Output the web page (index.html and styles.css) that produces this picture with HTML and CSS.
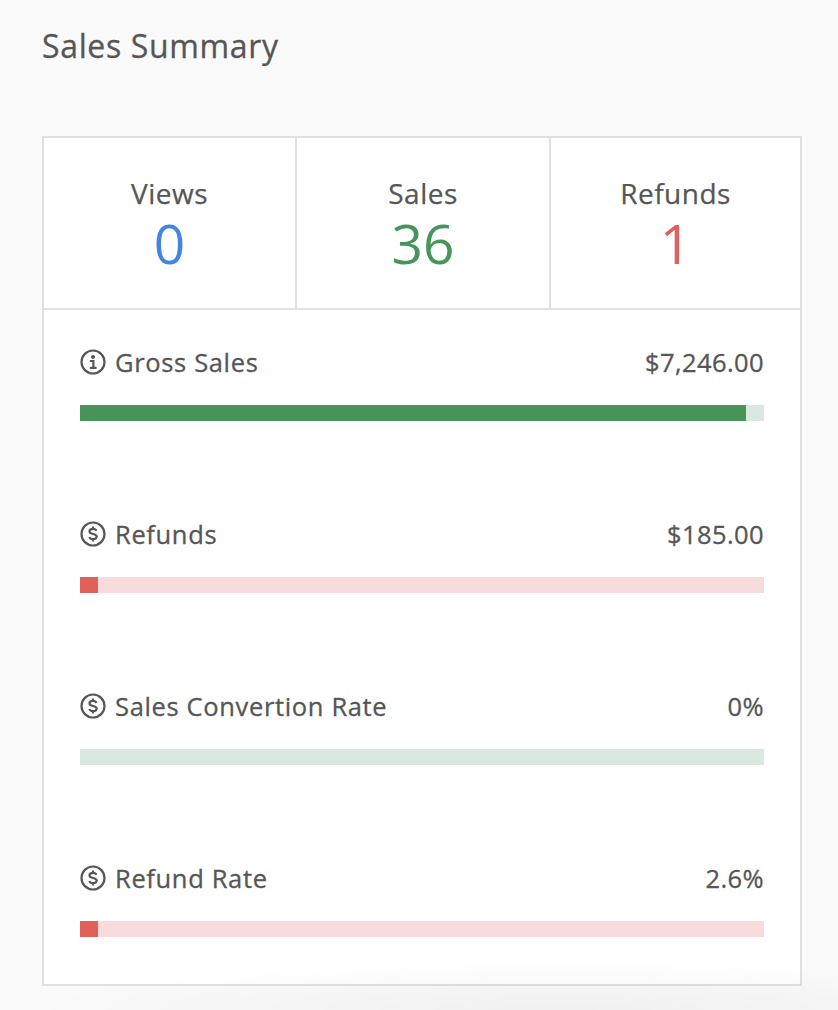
FILE: index.html
```html
<!DOCTYPE html>
<html lang="en">
  <head>
    <meta charset="UTF-8" />
    <meta name="viewport" content="width=device-width, initial-scale=1.0" />
    <title>Sales Summary</title>
    <link rel="stylesheet" href="styles.css">
  </head>
  <body>
    <h1 class="page-title">Sales Summary</h1>

    <div class="card">
      <div class="stats">
        <div class="stat">
          <div class="stat-label">Views</div>
          <div class="stat-value blue">0</div>
        </div>
        <div class="stat">
          <div class="stat-label">Sales</div>
          <div class="stat-value green">36</div>
        </div>
        <div class="stat">
          <div class="stat-label">Refunds</div>
          <div class="stat-value red">1</div>
        </div>
      </div>

      <div class="metrics">
        <div class="metric">
          <div class="metric-head">
            <span class="metric-name">
              <svg class="icon" viewBox="0 0 26 26"><circle cx="13" cy="13" r="11.500"/><circle class="solid" cx="13" cy="8" r="2"/><path d="M9.800 12h3.600v6.500M9.800 18.800h6.800"/></svg>
              Gross Sales
            </span>
            <span>$7,246.00</span>
          </div>
          <div class="bar bar-green"><div class="fill fill-green" style="width: 97.4%"></div></div>
        </div>

        <div class="metric">
          <div class="metric-head">
            <span class="metric-name">
              <svg class="icon" viewBox="0 0 26 26"><circle cx="13" cy="13" r="11.500"/><path d="M16.400 9.800c-.5-1.300-1.800-2-3.400-2-2 0-3.500 1-3.500 2.600 0 3.700 7.200 1.500 7.200 5.200 0 1.600-1.600 2.600-3.700 2.600-1.800 0-3.200-.8-3.700-2.200M13 5.400v2.400M13 18.200v2.400"/></svg>
              Refunds
            </span>
            <span>$185.00</span>
          </div>
          <div class="bar bar-red"><div class="fill fill-red" style="width: 2.6%"></div></div>
        </div>

        <div class="metric">
          <div class="metric-head">
            <span class="metric-name">
              <svg class="icon" viewBox="0 0 26 26"><circle cx="13" cy="13" r="11.500"/><path d="M16.400 9.800c-.5-1.300-1.800-2-3.400-2-2 0-3.500 1-3.500 2.600 0 3.700 7.200 1.500 7.200 5.200 0 1.600-1.600 2.600-3.700 2.600-1.800 0-3.200-.8-3.700-2.200M13 5.400v2.400M13 18.200v2.400"/></svg>
              Sales Convertion Rate
            </span>
            <span>0%</span>
          </div>
          <div class="bar bar-green"></div>
        </div>

        <div class="metric">
          <div class="metric-head">
            <span class="metric-name">
              <svg class="icon" viewBox="0 0 26 26"><circle cx="13" cy="13" r="11.500"/><path d="M16.400 9.800c-.5-1.300-1.800-2-3.400-2-2 0-3.500 1-3.500 2.600 0 3.700 7.200 1.500 7.200 5.200 0 1.600-1.600 2.600-3.700 2.600-1.800 0-3.200-.8-3.700-2.200M13 5.400v2.400M13 18.200v2.400"/></svg>
              Refund Rate
            </span>
            <span>2.6%</span>
          </div>
          <div class="bar bar-red"><div class="fill fill-red" style="width: 2.6%"></div></div>
        </div>
      </div>
    </div>
  </body>
</html>
```

FILE: styles.css
```css
html,
body {
  height: 100%;
}
body {
  font-family: "Open Sans", Arial, sans-serif;
  margin: 0;
  padding: 0 36px 0 42px;
  background-color: #fafafa;
  color: #565656;
  box-sizing: border-box;
  overflow: hidden;
}
/* faint shadow along the bottom edge of the window */
body::after {
  content: "";
  position: fixed;
  left: 0;
  right: 0;
  bottom: 0;
  height: 50px;
  background: radial-gradient(ellipse 65% 100% at 68% 100%, rgba(0, 0, 0, 0.04), transparent);
  pointer-events: none;
}
.page-title {
  margin: 0;
  padding-top: 24px;
  height: 136px;
  box-sizing: border-box;
  font-size: 32px;
  line-height: 44px;
  font-weight: 500;
  letter-spacing: 0.65px;
  -webkit-text-stroke: 0.3px #565656;
}
.card {
  background-color: #fff;
  border: 2px solid #e0e0e0;
  height: 850px;
  box-sizing: border-box;
}
.stats {
  display: grid;
  grid-template-columns: 253px 254px 1fr;
  height: 172px;
  border-bottom: 2px solid #e0e0e0;
  box-sizing: border-box;
  text-align: center;
}
.stat {
  padding-top: 36px;
  border-right: 2px solid #e0e0e0;
}
.stat:last-child {
  border-right: none;
}
.stat-label {
  font-size: 28px;
  line-height: 39px;
  font-weight: 500;
  letter-spacing: 0.5px;
  -webkit-text-stroke: 0.25px #565656;
}
.stat-value {
  font-size: 55px;
  line-height: 60px;
}
.blue {
  color: #4285e4;
}
.green {
  color: #48945a;
}
.red {
  color: #e0605c;
}
.metrics {
  padding: 34px 36px 0;
}
.metric {
  height: 172px;
}
.metric-head {
  display: flex;
  justify-content: space-between;
  font-size: 25.500px;
  line-height: 36px;
  font-weight: 500;
  letter-spacing: 0.4px;
  -webkit-text-stroke: 0.3px #565656;
}
.metric-name {
  display: flex;
  align-items: center;
  gap: 9px;
  letter-spacing: 0.65px;
}
.icon {
  width: 26px;
  height: 26px;
  fill: none;
  stroke: #565656;
  stroke-width: 2.2;
}
.icon .solid {
  fill: #565656;
  stroke: none;
}
.bar {
  margin-top: 25px;
  height: 16px;
}
.bar-green {
  background-color: #d9e9df;
}
.bar-red {
  background-color: #f8dcdb;
}
.fill {
  height: 100%;
}
.fill-green {
  background-color: #48945a;
}
.fill-red {
  background-color: #e0605c;
}
```
